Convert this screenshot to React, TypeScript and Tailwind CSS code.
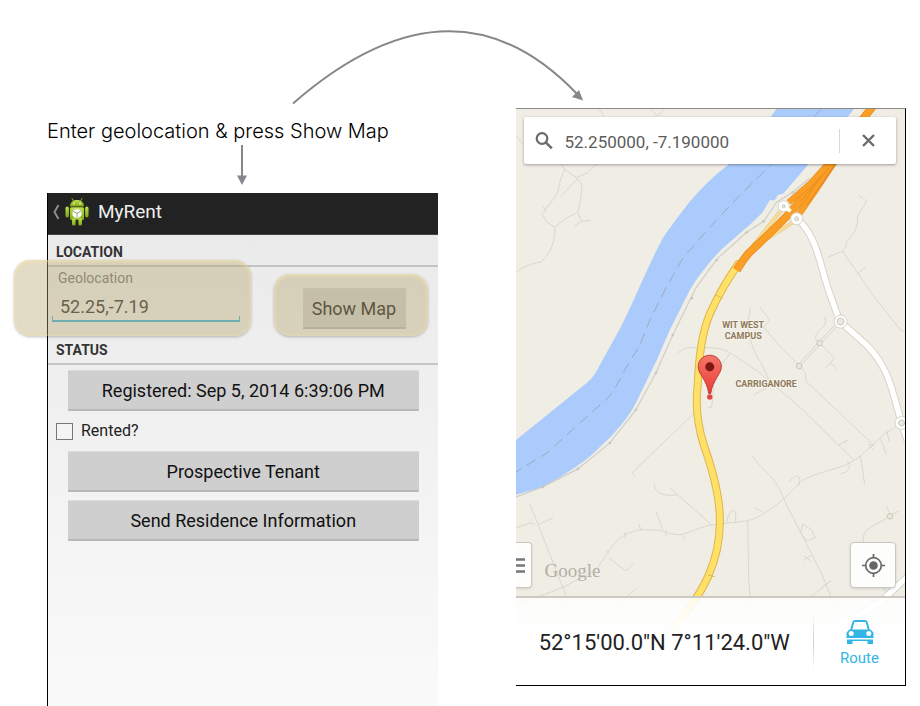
import type { ReactNode } from "react";

function RobotIcon() {
  return (
    <svg className="h-[30px] w-6" viewBox="0 0 24 30" aria-hidden="true">
      <defs>
        <linearGradient id="robot" x1="0" y1="0" x2="0" y2="1">
          <stop offset="0" stopColor="#bfe04a" />
          <stop offset="1" stopColor="#7da712" />
        </linearGradient>
      </defs>
      <g stroke="#8fae35" strokeWidth="1" strokeLinecap="round">
        <path d="M7 1.5l1.6 2.6M17 1.5l-1.6 2.6" />
      </g>
      <g fill="url(#robot)">
        <path d="M5 9.5C5 5.500 8 3 12 3s7 2.500 7 6.500z" />
        <rect x="5" y="10.300" width="14" height="12.700" rx="1.500" />
        <rect x="0.500" y="9.500" width="3.400" height="11" rx="1.700" />
        <rect x="20.100" y="9.500" width="3.400" height="11" rx="1.700" />
        <rect x="7" y="21" width="3.600" height="7.500" rx="1.600" />
        <rect x="13.400" y="21" width="3.600" height="7.500" rx="1.600" />
      </g>
      <circle cx="9" cy="6.800" r="0.800" fill="#fff" />
      <circle cx="15" cy="6.800" r="0.800" fill="#fff" />
      <circle cx="12" cy="16.500" r="5" fill="#d7e3b0" />
      <path d="M12 12.300l3.900 2v4.400L12 20.700l-3.900-2v-4.400z" fill="#fff" />
      <path d="M8.300 14.400L12 16.300l3.700-1.900M12 16.300v4" fill="none" stroke="#8b9a63" strokeWidth="0.900" />
    </svg>
  );
}

function DownArrow() {
  return (
    <svg className="h-10 w-3" viewBox="0 0 12 40" aria-hidden="true">
      <path d="M6 0v32" stroke="#84878b" strokeWidth="2" />
      <path d="M1 30.500h10L6 40z" fill="#84878b" />
    </svg>
  );
}

function CurvedArrow() {
  return (
    <svg className="pointer-events-none absolute top-5 left-72 h-[90px] w-[300px]" viewBox="288 20 300 90" aria-hidden="true">
      <path d="M293 103.500Q453 -36 577 94" fill="none" stroke="#84878b" strokeWidth="2" />
      <path d="M583 100.500l-11-3.500 7-7z" fill="#84878b" />
    </svg>
  );
}

function Highlight({ place }: { place: string }) {
  return (
    <span
      aria-hidden="true"
      className={`pointer-events-none absolute rounded-2xl bg-[#b6a56e]/40 shadow-[0_1px_3px_rgba(0,0,0,0.25),inset_0_1px_4px_rgba(255,236,170,0.7)] ${place}`}
    />
  );
}

function SectionHeading({ children }: { children: ReactNode }) {
  return (
    <h2 className="flex h-8 items-center border-b-2 border-[#c3c4c3] pt-1 pl-2 text-sm font-bold text-[#333]">
      {children}
    </h2>
  );
}

function WideButton({ children }: { children: ReactNode }) {
  return (
    <button
      type="button"
      className="h-[41px] w-full rounded-[1px] border-t border-b-2 border-t-[#dcdcdc] border-b-[#b8b8b8] bg-[#cfcfcf] pt-[2px] text-lg text-[#111]"
    >
      {children}
    </button>
  );
}

function RentScreen() {
  return (
    <section className="flex flex-1 flex-col border-l border-black bg-linear-to-b from-[#e9e9e9] to-[#fafafa]">
      <header className="flex h-[42px] items-center border-b border-[#444] bg-[#222] pb-1">
        <button type="button" aria-label="Back" className="flex items-center pl-1">
          <svg className="h-4 w-[9px]" viewBox="0 0 9 16" aria-hidden="true">
            <path d="M6.500 1L2.500 8l4 7" fill="none" stroke="#8c8c8c" strokeWidth="2" />
          </svg>
          <span className="pl-1">
            <RobotIcon />
          </span>
        </button>
        <h1 className="pt-[2px] pl-[9px] text-[19px] text-[#f0f0f0]">MyRent</h1>
      </header>

      <SectionHeading>LOCATION</SectionHeading>
      <div className="flex h-[66px] items-start justify-between pr-8 pl-1">
        <div className="relative w-[188px]">
          <label htmlFor="geo" className="block pt-[2px] pl-[6px] text-sm leading-[18px] text-[#777]">
            Geolocation
          </label>
          <input
            id="geo"
            defaultValue="52.25,-7.19"
            className="block h-[30px] w-full bg-transparent px-2 pt-2 text-lg text-[#333] outline-none"
          />
          <div className="-mt-[1px] h-[6px] border-x border-b-2 border-[#3fb5d6]" />
          <Highlight place="-top-[7px] -right-[11px] -left-[38px] h-[76px]" />
        </div>
        <div className="relative mt-[21px]">
          <button
            type="button"
            className="h-[41px] w-[103px] border-t border-b-2 border-t-[#d4d4d4] border-b-[#b8b8b8] bg-[#cfcfcf] pt-[2px] text-lg text-[#222]"
          >
            Show Map
          </button>
          <Highlight place="-top-[14px] -right-[22px] -left-[29px] h-[62px]" />
        </div>
      </div>

      <SectionHeading>STATUS</SectionHeading>
      <div className="flex flex-col pt-[5px] pr-[19px] pl-5">
        <WideButton>Registered: Sep 5, 2014 6:39:06 PM</WideButton>
        <label className="-ml-3 flex h-10 items-center gap-2 text-base text-[#222]">
          <input type="checkbox" className="size-[17px] appearance-none border border-[#777] bg-[#f4f4f4] checked:bg-[#33b5e5]" />
          Rented?
        </label>
        <div className="flex flex-col gap-2">
          <WideButton>Prospective Tenant</WideButton>
          <WideButton>Send Residence Information</WideButton>
        </div>
      </div>
    </section>
  );
}

const lanes = [
  "M599 108l5 8M651 108l6 8 8-8M516 135l7 9M560 163l6 7 10 7 6 7-1 14-3 14-12 6-11 9-8-5-5-8 15-20 4-16 4-9M577 177l10-4 9-9M577 179l-16 17M578 213l4 8 9-1M582 221l-8 5M543 206l3 5M555 228c0 15-4 24-14 34-10 1-18 5-25 10",
  "M859 195l8 6-9 15c1 10-4 19-11 25 0 4-1 8-4 10l-15 6M843 251l31 45 28 35 4-1M858 273l8-6",
  "M678 353c6-6 12-6 22-5 15-1 24 0 34 7l25 17 40 34 55 54M751 308l-3 14c0 15 6 30 14 42l6 13 10 12M760 307l10 13-6 7 15 18 20 20 7 8v8l68 64M768 387l-14 8M730 354l-7 9-9 22-2 22-4 1",
  "M799 366l21-23 17-18M820 343c-12-8 6-14 6-22l-1-4M820 343l15 15-9 10M831 363l6 6",
  "M701 407l-67 64c-2 3-1 5 2 6M654 484c1 9 10 13 24 11M670 488l42 37",
  "M902 423l-17 11-24 22c-20 16-44 14-60 26l-17 17c-14 12-25 19-36 22l-36 4c-18 4-24 9-33 10-10 0-14-5-24-5h-15c-20 4-27 14-34 26l-10 14-30 16c-20 9-35 13-50 20",
  "M861 456l4 28M881 439l6 16M887 431l3 11M839 445l9-5-3 3M875 446l-6-2 5 6M841 474l6-2c4-7 4-7 0-12M752 455c14 20 23 20 32 44l38 75 17 42M789 482c9-10 13-7 10 4",
  "M727 522c2-12 8-14 9-8v9M755 508l8 4M748 521l1 58 3 42M803 524l9 6 4 8-9 3-6-8zM804 556l7 5M812 555l-8 6M810 598l20-16M824 586l8-5",
  "M530 504l35 89 5 30M516 528l15-5 4 2M538 525l15-7M625 532v7M639 524l2 6M656 511l7 19M666 531v6M682 534l4 6M606 550l3 4M609 558l17 13 8-7M636 589l-30 27",
  "M887 507l4 8 9-4M891 516l-19 11c-8 5-9 9-8 15l22 50 11-5",
];

function MapArt() {
  return (
    <svg
      className="absolute inset-0 h-full w-full"
      viewBox="516 108 390 578"
      preserveAspectRatio="xMidYMid slice"
      role="img"
      aria-label="Map of Carriganore"
    >
      <rect x="516" y="108" width="390" height="578" fill="#efede4" />
      <path
        d="M777 108l-6 9-43 48C702 185 686 205 663 238 650 262 638 292 622 325L600 365Q594 377 588 382L516 440V495L543 487C568 473 588 460 600 447 614 435 628 418 635 405L657 360 670 330 690 290C697 278 710 261 723 248L753 222 763 212 770 200h5l3-5 6-2 24-28 47-57z"
        fill="#abcbfd"
      />
      <path
        d="M822 108l-49 55-30 29-33 35-27 31-18 32-15 30-10 25-17 28q-6 14-15 25l-28 25-33 30-31 19"
        fill="none"
        stroke="#9ea9bb"
        strokeWidth="1"
        strokeDasharray="11 6"
      />
      <g fill="none" stroke="#dad8cd" strokeWidth="1">
        <path
          id="rail"
          d="M516 497l27-10 35-18 32-26 26-33 20-37 17-38 23-47 21-29 30-27 17-11 13-19 16-10 17-14"
          stroke="#cfcfca"
          strokeWidth="1.200"
        />
        {lanes.map((d) => (
          <path key={d} d={d} />
        ))}
      </g>
      <g fill="#c5c5c2">
        {[
          [543, 487], [578, 469], [610, 443], [636, 410], [656, 373], [673, 335],
          [692, 298], [717, 260], [747, 232], [764, 221], [793, 192],
        ].map(([x, y]) => (
          <circle key={x} cx={x} cy={y} r="1.300" />
        ))}
      </g>

      <g fill="none" strokeLinecap="round">
        <path d="M799 366l21-23 17-18" stroke="#d5d2c5" strokeWidth="3" />
        <path d="M799 366l21-23 17-18" stroke="#f3f1ea" strokeWidth="1.500" />
        <path d="M783 208l-30 38M795 221l-38 24" stroke="#e8cf93" strokeWidth="4" />
        <path d="M783 208l-30 38M795 221l-38 24" stroke="#fbdc98" strokeWidth="2.500" />
      </g>

      <g fill="none">
        <g id="local-roads">
          <path d="M797 218C818 236 820 265 830 293L840 321 867 345C890 368 893 392 902 423l6 18M908 577l-28 26-33 20-30 14" stroke="#d6d3cb" strokeWidth="7.500" />
          <path d="M797 218C818 236 820 265 830 293L840 321 867 345C890 368 893 392 902 423l6 18M908 577l-28 26-33 20-30 14" stroke="#fff" strokeWidth="5.500" />
        </g>
        <path d="M740 262C729 277 719 294 710 314 702 333 699 356 698 384 695 408 698 426 704 445 710 462 719 491 720 515 722 560 704 596 667 635" stroke="#dfb54d" strokeWidth="8" />
        <path d="M740 262C729 277 719 294 710 314 702 333 699 356 698 384 695 408 698 426 704 445 710 462 719 491 720 515 722 560 704 596 667 635" stroke="#ffe168" strokeWidth="6" />
        <path d="M716 295l7 3M708 575l7 2" stroke="#dfb54d" strokeWidth="1" />
        <path d="M874 105l-14 18-29 42-41 48-20 20-21 20q-6 7-12 17" stroke="#e58b1e" strokeWidth="8" />
        <path d="M874 105l-14 18-29 42-41 48-20 20-21 20q-6 7-12 17" stroke="#fa9e25" strokeWidth="6.500" />
        <path d="M829 163l-18 20-22 19M836 160l-20 30-18 26" stroke="#e58b1e" strokeWidth="6" />
        <path d="M829 163l-18 20-22 19M834 160l-18 30-18 26" stroke="#fa9e25" strokeWidth="5" />
        <path d="M829 168l-28 33M830 172l-23 33" stroke="#e58b1e" strokeWidth="1" />
      </g>

      <g fill="#fff" stroke="#d6d3cb" strokeWidth="1">
        <circle cx="784" cy="206" r="5.500" />
        <circle cx="797" cy="218.500" r="6" />
        <circle cx="841" cy="321.500" r="6.500" />
        <circle cx="902" cy="423" r="6.500" />
      </g>
      <path d="M787 208l4 3" stroke="#fff" strokeWidth="4" />
      <g fill="#e9e7de" stroke="#c9c6b9" strokeWidth="1">
        <circle cx="784" cy="206" r="1.500" />
        <circle cx="797" cy="218.500" r="2" />
        <circle cx="841" cy="321.500" r="3.500" />
        <circle cx="902" cy="423" r="3" />
        <circle cx="820" cy="343" r="2.800" />
        <circle cx="799.500" cy="366" r="2.800" />
        <circle cx="890.500" cy="516.500" r="2.800" />
      </g>

      <g
        fill="#90795a"
        stroke="#f5f3ec"
        strokeWidth="2"
        paintOrder="stroke"
        textAnchor="middle"
        className="font-['Roboto',sans-serif] text-[9px] font-bold"
      >
        <text x="743.500" y="328">WIT WEST</text>
        <text x="743.500" y="339">CAMPUS</text>
        <text x="766.500" y="387">CARRIGANORE</text>
      </g>

      <defs>
        <linearGradient id="pin" x1="0" y1="0" x2="0" y2="1">
          <stop offset="0" stopColor="#f5756b" />
          <stop offset="1" stopColor="#ea3d36" />
        </linearGradient>
      </defs>
      <path
        d="M710 355.200c-6.700 0-11.600 5-11.600 11.500 0 7.600 8.600 12.500 10.600 26.800h2c2-14.300 10.600-19.200 10.600-26.800 0-6.500-4.900-11.500-11.600-11.500z"
        fill="url(#pin)"
        stroke="#b5332c"
        strokeWidth="0.900"
      />
      <circle cx="710" cy="366.800" r="4.500" fill="#7d1712" />
      <circle cx="710" cy="397" r="2.700" fill="#e5453f" />
    </svg>
  );
}

function SearchBar() {
  return (
    <form className="relative mt-2 mr-[9px] ml-2 flex h-[47px] items-center rounded-xs bg-white shadow-[0_1px_3px_rgba(0,0,0,0.35)]">
      <svg className="ml-[11px] size-[18px] shrink-0" viewBox="0 0 18 18" aria-hidden="true">
        <circle cx="7" cy="6.500" r="5.300" fill="none" stroke="#6b6b6b" strokeWidth="2.200" />
        <path d="M10.800 10.300l6 6" stroke="#6b6b6b" strokeWidth="2.600" />
      </svg>
      <input
        aria-label="Search the map"
        defaultValue="52.250000, -7.190000"
        className="ml-3 h-full min-w-0 flex-1 bg-transparent pt-[2px] text-[17px] text-[#5c5c5c] outline-none"
      />
      <button type="button" aria-label="Clear search" className="flex h-6 w-[57px] items-center justify-center border-l border-[#d8d8d8]">
        <svg className="size-[13px]" viewBox="0 0 13 13" aria-hidden="true">
          <path d="M1 1l11 11M12 1L1 12" stroke="#6b6b6b" strokeWidth="2.400" />
        </svg>
      </button>
    </form>
  );
}

function MapScreen() {
  return (
    <section className="relative flex h-[578px] flex-col overflow-hidden border-t border-r border-b border-t-[#8b8a86] border-r-black border-b-black">
      <MapArt />
      <SearchBar />
      <div className="relative mt-auto mb-2 flex items-center pr-[9px]">
        <button
          type="button"
          aria-label="Menu"
          className="flex h-[46px] w-4 items-center rounded-r-sm border border-l-0 border-[#c9c7c1] bg-[#fdfdfc] shadow-sm"
        >
          <svg className="h-[15px] w-[9px]" viewBox="0 0 9 15" aria-hidden="true">
            <path d="M0 1.500h9M0 7.500h9M0 13.500h9" stroke="#76767a" strokeWidth="2.600" />
          </svg>
        </button>
        <span className="flex-1 pt-3 pl-[13px] font-['Liberation_Serif',serif] text-[19px] text-[#b1afa9]">Google</span>
        <button
          type="button"
          aria-label="My location"
          className="flex size-[46px] items-center justify-center rounded-sm border border-[#c9c7c1] bg-[#fdfdfc] shadow-sm"
        >
          <svg className="size-[23px]" viewBox="0 0 23 23" aria-hidden="true">
            <circle cx="11.500" cy="11.500" r="7.800" fill="none" stroke="#666" strokeWidth="1.700" />
            <circle cx="11.500" cy="11.500" r="4.300" fill="#666" />
            <path d="M11.500 0v4M11.500 19v4M0 11.500h4M19 11.500h4" stroke="#666" strokeWidth="1.700" />
          </svg>
        </button>
      </div>
      <footer className="relative flex h-[89px] items-center border-t-2 border-[#cbc9c2] bg-linear-to-b from-white/85 to-white to-45%">
        <p className="flex-1 pt-[2px] text-center text-[22px] text-[#222]">52°15'00.0"N 7°11'24.0"W</p>
        <div className="h-14 w-px bg-linear-to-b from-transparent via-[#ccc] to-transparent" />
        <button type="button" className="flex w-[91px] flex-col items-center gap-1 pt-1 text-[15px] leading-5 text-[#33b5e5]">
          <svg className="h-6 w-7" viewBox="0 0 28 24" aria-hidden="true">
            <path d="M5 10.500L7.200 2.600Q7.600 1 9.200 1h9.600q1.600 0 2 1.600L23 10.500" fill="none" stroke="#33b5e5" strokeWidth="2" />
            <path d="M0.500 18v-5.500l3-3h21l3 3V18zM1 19.500h26v1.500h-26zM1 21h5.500v3H1zM21.500 21h5.500v3h-5.500z" fill="#33b5e5" />
            <circle cx="5.200" cy="13.500" r="2.500" fill="#fff" />
            <circle cx="22.800" cy="13.500" r="2.500" fill="#fff" />
          </svg>
          Route
        </button>
      </footer>
    </section>
  );
}

export default function App() {
  return (
    <main className="relative grid min-h-screen grid-cols-2 gap-x-[78px] bg-white pr-[14px] pl-[47px] font-['Roboto',sans-serif]">
      <div className="flex flex-col pt-[117px]">
        <p className="font-['Inter',sans-serif] text-xl leading-7 font-light text-black">Enter geolocation &amp; press Show Map</p>
        <div className="flex h-12 justify-center">
          <DownArrow />
        </div>
        <RentScreen />
      </div>
      <div className="pt-[108px]">
        <MapScreen />
      </div>
      <CurvedArrow />
    </main>
  );
}
